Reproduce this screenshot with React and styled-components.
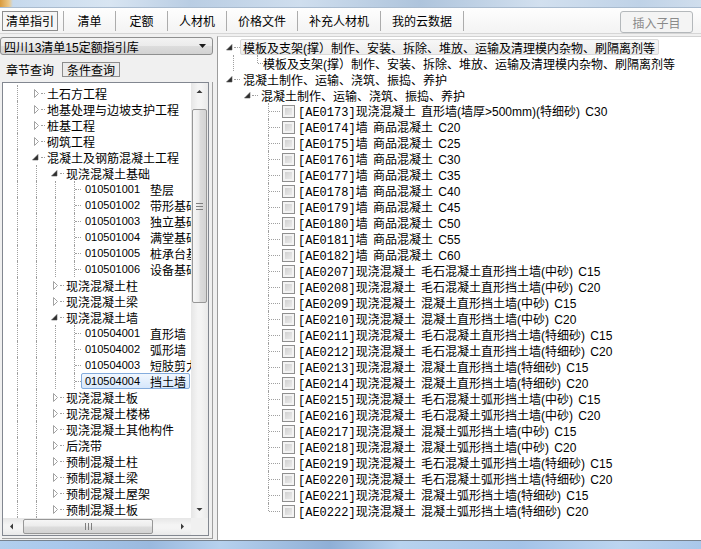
import React from "react";
import styled, { createGlobalStyle, css } from "styled-components";

const GlobalStyle = createGlobalStyle`
  * { box-sizing: border-box; }
  html, body { margin: 0; padding: 0; }
  body {
    width: 701px;
    height: 549px;
    overflow: hidden;
    background: #f0f0f0;
    font-family: "Liberation Sans", "Noto Sans CJK SC", sans-serif;
    font-size: 12px;
    color: #000;
  }
`;

const leftRows = [
  { guides: [1], open: false, text: "土石方工程" },
  { guides: [1], open: false, text: "地基处理与边坡支护工程" },
  { guides: [1], open: false, text: "桩基工程" },
  { guides: [1], open: false, text: "砌筑工程" },
  { guides: [1], open: true, text: "混凝土及钢筋混凝土工程" },
  { guides: [1, 1], open: true, text: "现浇混凝土基础" },
  { guides: [1, 1, 1], code: "010501001", text: "垫层" },
  { guides: [1, 1, 1], code: "010501002", text: "带形基础" },
  { guides: [1, 1, 1], code: "010501003", text: "独立基础" },
  { guides: [1, 1, 1], code: "010501004", text: "满堂基础" },
  { guides: [1, 1, 1], code: "010501005", text: "桩承台基础" },
  { guides: [1, 1, 1], code: "010501006", text: "设备基础" },
  { guides: [1, 1], open: false, text: "现浇混凝土柱" },
  { guides: [1, 1], open: false, text: "现浇混凝土梁" },
  { guides: [1, 1], open: true, text: "现浇混凝土墙" },
  { guides: [1, 1, 1], code: "010504001", text: "直形墙" },
  { guides: [1, 1, 1], code: "010504002", text: "弧形墙" },
  { guides: [1, 1, 1], code: "010504003", text: "短肢剪力墙" },
  { guides: [1, 1, 1], code: "010504004", text: "挡土墙", selected: true },
  { guides: [1, 1], open: false, text: "现浇混凝土板" },
  { guides: [1, 1], open: false, text: "现浇混凝土楼梯" },
  { guides: [1, 1], open: false, text: "现浇混凝土其他构件" },
  { guides: [1, 1], open: false, text: "后浇带" },
  { guides: [1, 1], open: false, text: "预制混凝土柱" },
  { guides: [1, 1], open: false, text: "预制混凝土梁" },
  { guides: [1, 1], open: false, text: "预制混凝土屋架" },
  { guides: [1, 1], open: false, text: "预制混凝土板" },
  { guides: [1, 1], open: false, text: "预制混凝土楼梯" },
];

const leaves = [
  ["AE0173", "现浇混凝土 直形墙(墙厚>500mm)(特细砂) C30"],
  ["AE0174", "墙 商品混凝土 C20"],
  ["AE0175", "墙 商品混凝土 C25"],
  ["AE0176", "墙 商品混凝土 C30"],
  ["AE0177", "墙 商品混凝土 C35"],
  ["AE0178", "墙 商品混凝土 C40"],
  ["AE0179", "墙 商品混凝土 C45"],
  ["AE0180", "墙 商品混凝土 C50"],
  ["AE0181", "墙 商品混凝土 C55"],
  ["AE0182", "墙 商品混凝土 C60"],
  ["AE0207", "现浇混凝土 毛石混凝土直形挡土墙(中砂) C15"],
  ["AE0208", "现浇混凝土 毛石混凝土直形挡土墙(中砂) C20"],
  ["AE0209", "现浇混凝土 混凝土直形挡土墙(中砂) C15"],
  ["AE0210", "现浇混凝土 混凝土直形挡土墙(中砂) C20"],
  ["AE0211", "现浇混凝土 毛石混凝土直形挡土墙(特细砂) C15"],
  ["AE0212", "现浇混凝土 毛石混凝土直形挡土墙(特细砂) C20"],
  ["AE0213", "现浇混凝土 混凝土直形挡土墙(特细砂) C15"],
  ["AE0214", "现浇混凝土 混凝土直形挡土墙(特细砂) C20"],
  ["AE0215", "现浇混凝土 毛石混凝土弧形挡土墙(中砂) C15"],
  ["AE0216", "现浇混凝土 毛石混凝土弧形挡土墙(中砂) C20"],
  ["AE0217", "现浇混凝土 混凝土弧形挡土墙(中砂) C15"],
  ["AE0218", "现浇混凝土 混凝土弧形挡土墙(中砂) C20"],
  ["AE0219", "现浇混凝土 毛石混凝土弧形挡土墙(特细砂) C15"],
  ["AE0220", "现浇混凝土 毛石混凝土弧形挡土墙(特细砂) C20"],
  ["AE0221", "现浇混凝土 混凝土弧形挡土墙(特细砂) C15"],
  ["AE0222", "现浇混凝土 混凝土弧形挡土墙(特细砂) C20"],
];

const tabs = ["清单指引", "清单", "定额", "人材机", "价格文件", "补充人材机", "我的云数据"];

const Window = styled.div`
  width: 701px;
  height: 549px;
  display: flex;
  flex-direction: column;
  background: #f0f0f0;
`;

const TopStrip = styled.div`
  height: 8px;
  flex: none;
  background: linear-gradient(
    90deg,
    #d99a3c 0,
    #ecc888 9px,
    #c6d9ed 13px,
    #d8e5f2 110px,
    #b9cde3 190px,
    #cfdeee 300px,
    #aec4dc 420px,
    #d2e0ef 540px,
    #bfd2e7 640px,
    #d0deed 701px
  );
  border-bottom: 1px solid #a9bbcf;
`;

const TabBar = styled.div`
  height: 26px;
  flex: none;
  display: flex;
  align-items: center;
  padding: 0 8px 0 2px;
  background: linear-gradient(#fefefe, #f3f3f3);
  border-bottom: 1px solid #d6d6d6;
`;

const Tab = styled.div`
  height: 20px;
  display: flex;
  align-items: center;
  justify-content: center;
  min-width: 52px;
  padding: 0 11px;
  border-left: 1px solid #acacac;
  white-space: nowrap;
  ${(p) =>
    p.$last &&
    css`
      border-right: 1px solid #acacac;
    `}
  ${(p) =>
    p.$active &&
    css`
      min-width: 0;
      padding: 0 3px;
      border: 1px solid #8d8d8d;
      background: #f6f6f6;
      margin-right: 5px;
    `}
`;

const InsertButton = styled.div`
  margin-left: auto;
  align-self: flex-end;
  width: 73px;
  height: 22px;
  display: flex;
  align-items: center;
  justify-content: center;
  border: 1px solid #b4b8bb;
  border-radius: 3px;
  background: #f4f4f4;
  color: #8a8a8a;
`;

const Main = styled.div`
  flex: 1;
  min-height: 0;
  display: flex;
`;

const LeftPane = styled.div`
  width: 217px;
  flex: none;
  display: flex;
  flex-direction: column;
  padding-top: 3px;
`;

const Combo = styled.div`
  width: 213px;
  height: 18px;
  flex: none;
  display: flex;
  align-items: center;
  justify-content: space-between;
  padding: 0 6px 0 3px;
  border: 1px solid #8e8f8f;
  border-radius: 3px;
  background: linear-gradient(#f3f3f3 0%, #ebebeb 50%, #dddddd 51%, #d2d2d2 100%);
`;

const ChapterTabs = styled.div`
  height: 27px;
  flex: none;
  display: flex;
  align-items: center;
  padding: 1px 0 0 6px;
`;

const ChapterTab = styled.div`
  height: 15px;
  display: flex;
  align-items: center;
  ${(p) =>
    p.$boxed &&
    css`
      margin-left: 8px;
      padding: 0 4px;
      border: 1px solid #8c8c8c;
      background: #ebebeb;
    `}
`;

const TreeFrame = styled.div`
  margin-left: 2px;
  width: 211px;
  height: 457px;
  flex: none;
  padding: 0 3px 2px 0;
  border-right: 1px solid #a0a0a0;
  border-bottom: 1px solid #a0a0a0;
`;

const TreeCtl = styled.div`
  height: 100%;
  border: 1px solid #828790;
  background: #fff;
  display: grid;
  grid-template-columns: 1fr 17px;
  grid-template-rows: 1fr 17px;
`;

const TreeArea = styled.div`
  overflow: hidden;
  padding-top: 2px;
`;

const LRow = styled.div`
  height: 16px;
  display: flex;
  align-items: center;
  white-space: nowrap;
  padding-left: 5px;
`;

const Guide = styled.span`
  flex: none;
  width: 19px;
  align-self: stretch;
  position: relative;
  ${(p) =>
    p.$line &&
    css`
      &::before {
        content: "";
        position: absolute;
        left: 9px;
        top: 0;
        bottom: 0;
        border-left: 1px dotted #a0a0a0;
      }
    `}
`;

const Elbow = styled.span`
  flex: none;
  align-self: stretch;
  width: ${(p) => p.$w}px;
  position: relative;
  &::before {
    content: "";
    position: absolute;
    left: ${(p) => p.$x}px;
    top: 0;
    height: ${(p) => (p.$end ? "8px" : "100%")};
    border-left: 1px dotted #a0a0a0;
  }
  &::after {
    content: "";
    position: absolute;
    left: ${(p) => p.$x + 1}px;
    right: 0;
    top: 8px;
    border-top: 1px dotted #a0a0a0;
  }
`;

const VDots = styled.span`
  flex: none;
  align-self: stretch;
  width: 1px;
  border-left: 1px dotted #a0a0a0;
`;

const Spacer = styled.span`
  flex: none;
  width: ${(p) => p.$w}px;
`;

const TriCell = styled.span`
  flex: none;
  width: 19px;
  display: flex;
  align-items: center;
  padding-left: 4px;
`;

const HDots = styled.span`
  flex: none;
  width: ${(p) => p.$w}px;
  margin-left: ${(p) => p.$ml || 0}px;
  height: 1px;
  border-top: 1px dotted #a0a0a0;
`;

const LLabel = styled.span`
  height: 16px;
  display: inline-flex;
  align-items: center;
  border: 1px solid transparent;
  border-radius: 2px;
  padding: 0 ${(p) => (p.$leaf ? "3px" : "0")};
  ${(p) =>
    p.$selected &&
    css`
      border-color: #84acdd;
      background: linear-gradient(#f1f7fe, #d6e7fc);
    `}
`;

const LCode = styled.span`
  display: inline-block;
  width: 65px;
  font-size: 11px;
`;

const VScroll = styled.div`
  display: flex;
  flex-direction: column;
  background: linear-gradient(90deg, #e6e6e6, #f4f4f4 40%, #f4f4f4 60%, #e9e9e9);
`;

const HScroll = styled.div`
  display: flex;
  align-items: stretch;
  background: linear-gradient(#e6e6e6, #f4f4f4 40%, #f4f4f4 60%, #e9e9e9);
`;

const Corner = styled.div`
  background: #f0f0f0;
`;

const ArrowBtn = styled.div`
  flex: none;
  width: 17px;
  height: 17px;
  display: flex;
  align-items: center;
  justify-content: center;
`;

const Track = styled.div`
  flex: 1;
  display: flex;
  flex-direction: ${(p) => (p.$horizontal ? "row" : "column")};
  ${(p) => (p.$horizontal ? "padding-left: 3px;" : "padding-top: 9px;")}
`;

const Thumb = styled.div`
  flex: none;
  display: flex;
  align-items: center;
  justify-content: center;
  border: 1px solid #979797;
  border-radius: 2px;
  ${(p) =>
    p.$horizontal
      ? css`
          width: 130px;
          height: 15px;
          margin-top: 1px;
          background: linear-gradient(#f6f6f6, #ececec 45%, #dcdcdc 55%, #d3d3d3);
        `
      : css`
          height: 194px;
          width: 15px;
          margin-left: 1px;
          background: linear-gradient(90deg, #f6f6f6, #ececec 45%, #dcdcdc 55%, #d3d3d3);
        `}
`;

const RightPane = styled.div`
  flex: 1;
  margin-top: 2px;
  padding-top: 2px;
  background: #fff;
  border-left: 1px solid #9c9c9c;
  border-top: 1px solid #d2d2d2;
  overflow: hidden;
`;

const RRow = styled.div`
  height: 16px;
  display: flex;
  align-items: center;
  white-space: nowrap;
  padding-left: ${(p) => p.$indent}px;
`;

const RLabel = styled.span`
  height: 16px;
  display: inline-flex;
  align-items: center;
  padding: 0 2px;
  border: 1px solid transparent;
  border-radius: 2px;
  ${(p) =>
    p.$hl &&
    css`
      border-color: #d9d9d9;
      background: linear-gradient(#f7f7f7, #ededed);
      padding-right: 3px;
    `}
`;

const Check = styled.span`
  flex: none;
  width: 13px;
  height: 13px;
  margin: 0 3px 0 2px;
  border: 1px solid #8f8f8f;
  background: linear-gradient(135deg, #c9c9c9, #f2f2f2);
  box-shadow: inset 0 0 0 2px #f3f3f3;
`;

const LeafText = styled.span`
  word-spacing: 2px;
`;

const Code = styled.span`
  font-family: "Liberation Mono", monospace;
`;

const BottomStrip = styled.div`
  height: 9px;
  flex: none;
  border-top: 1px solid #76828e;
  background: linear-gradient(
    90deg,
    #b2cfee 0,
    #a9c8ec 60px,
    #9ab9de 150px,
    #b6d1ee 220px,
    #8fafd6 330px,
    #b8d3ef 400px,
    #a4c3e8 520px,
    #bcd5f0 620px,
    #a9c7ea 701px
  );
`;

const Triangle = ({ open }) =>
  open ? (
    <svg width="9" height="9" viewBox="0 0 9 9">
      <path d="M7 1.5 L7 7 L1.5 7 Z" fill="#2b2b2b" stroke="#595959" strokeWidth="0.6" />
    </svg>
  ) : (
    <svg width="9" height="9" viewBox="0 0 9 9">
      <path d="M3.5 0.5 L7.5 4.5 L3.5 8.5 Z" fill="#fff" stroke="#a2a2a2" strokeWidth="1" />
    </svg>
  );

const Arrow = ({ dir }) => {
  const paths = {
    up: "M0.5 4 L3.5 1 L6.5 4 Z",
    down: "M0.5 1 L3.5 4 L6.5 1 Z",
  };
  if (dir === "left" || dir === "right") {
    return (
      <svg width="5" height="7" viewBox="0 0 5 7">
        <path d={dir === "left" ? "M4 0.5 L1 3.5 L4 6.5 Z" : "M1 0.5 L4 3.5 L1 6.5 Z"} fill="#3a3a3a" />
      </svg>
    );
  }
  return (
    <svg width="7" height="5" viewBox="0 0 7 5">
      <path d={paths[dir]} fill="#3a3a3a" />
    </svg>
  );
};

const Grip = ({ horizontal }) =>
  horizontal ? (
    <svg width="7" height="7" viewBox="0 0 7 7">
      <path d="M0.5 0 V7 M3.5 0 V7 M6.5 0 V7" stroke="#7f7f7f" strokeWidth="1" />
    </svg>
  ) : (
    <svg width="7" height="7" viewBox="0 0 7 7">
      <path d="M0 0.5 H7 M0 3.5 H7 M0 6.5 H7" stroke="#7f7f7f" strokeWidth="1" />
    </svg>
  );

const LeftTree = () => (
  <TreeArea>
    {leftRows.map((r, i) => (
      <LRow key={i}>
        {r.guides.map((g, j) => (
          <Guide key={j} $line={!!g} />
        ))}
        {r.code ? (
          <Elbow $w={16} $x={9} />
        ) : (
          <TriCell>
            <Triangle open={r.open} />
            <HDots $w={4} $ml={1} />
          </TriCell>
        )}
        {r.code ? (
          <LLabel $leaf $selected={r.selected}>
            <LCode>{r.code}</LCode>
            {r.text}
          </LLabel>
        ) : (
          <LLabel>{r.text}</LLabel>
        )}
      </LRow>
    ))}
  </TreeArea>
);

export default function App() {
  return (
    <Window>
      <GlobalStyle />
      <TopStrip />
      <TabBar>
        {tabs.map((t, i) => (
          <Tab key={t} $active={i === 0} $last={i === tabs.length - 1}>
            {t}
          </Tab>
        ))}
        <InsertButton>插入子目</InsertButton>
      </TabBar>
      <Main>
        <LeftPane>
          <Combo>
            <span>四川13清单15定额指引库</span>
            <svg width="7" height="4" viewBox="0 0 7 4">
              <path d="M0 0 L7 0 L3.5 4 Z" fill="#1a1a1a" />
            </svg>
          </Combo>
          <ChapterTabs>
            <ChapterTab>章节查询</ChapterTab>
            <ChapterTab $boxed>条件查询</ChapterTab>
          </ChapterTabs>
          <TreeFrame>
            <TreeCtl>
              <LeftTree />
              <VScroll>
                <ArrowBtn>
                  <Arrow dir="up" />
                </ArrowBtn>
                <Track>
                  <Thumb>
                    <Grip />
                  </Thumb>
                </Track>
                <ArrowBtn>
                  <Arrow dir="down" />
                </ArrowBtn>
              </VScroll>
              <HScroll>
                <ArrowBtn>
                  <Arrow dir="left" />
                </ArrowBtn>
                <Track $horizontal>
                  <Thumb $horizontal>
                    <Grip horizontal />
                  </Thumb>
                </Track>
                <ArrowBtn>
                  <Arrow dir="right" />
                </ArrowBtn>
              </HScroll>
              <Corner />
            </TreeCtl>
          </TreeFrame>
        </LeftPane>
        <RightPane>
          <RRow $indent={7}>
            <Triangle open />
            <HDots $w={6} />
            <RLabel $hl>模板及支架(撑）制作、安装、拆除、堆放、运输及清理模内杂物、刷隔离剂等</RLabel>
          </RRow>
          <RRow $indent={15}>
            <VDots />
            <Spacer $w={23} />
            <Elbow $w={6} $x={0} $end />
            <span>模板及支架(撑）制作、安装、拆除、堆放、运输及清理模内杂物、刷隔离剂等</span>
          </RRow>
          <RRow $indent={7}>
            <Triangle open />
            <HDots $w={6} />
            <RLabel>混凝土制作、运输、浇筑、振捣、养护</RLabel>
          </RRow>
          <RRow $indent={25}>
            <Triangle open />
            <HDots $w={6} />
            <RLabel>混凝土制作、运输、浇筑、振捣、养护</RLabel>
          </RRow>
          {leaves.map(([code, text], i) => (
            <RRow key={code} $indent={50}>
              <Elbow $w={12} $x={0} $end={i === leaves.length - 1} />
              <Check />
              <LeafText>
                <Code>[{code}]</Code>
                {text}
              </LeafText>
            </RRow>
          ))}
        </RightPane>
      </Main>
      <BottomStrip />
    </Window>
  );
}
